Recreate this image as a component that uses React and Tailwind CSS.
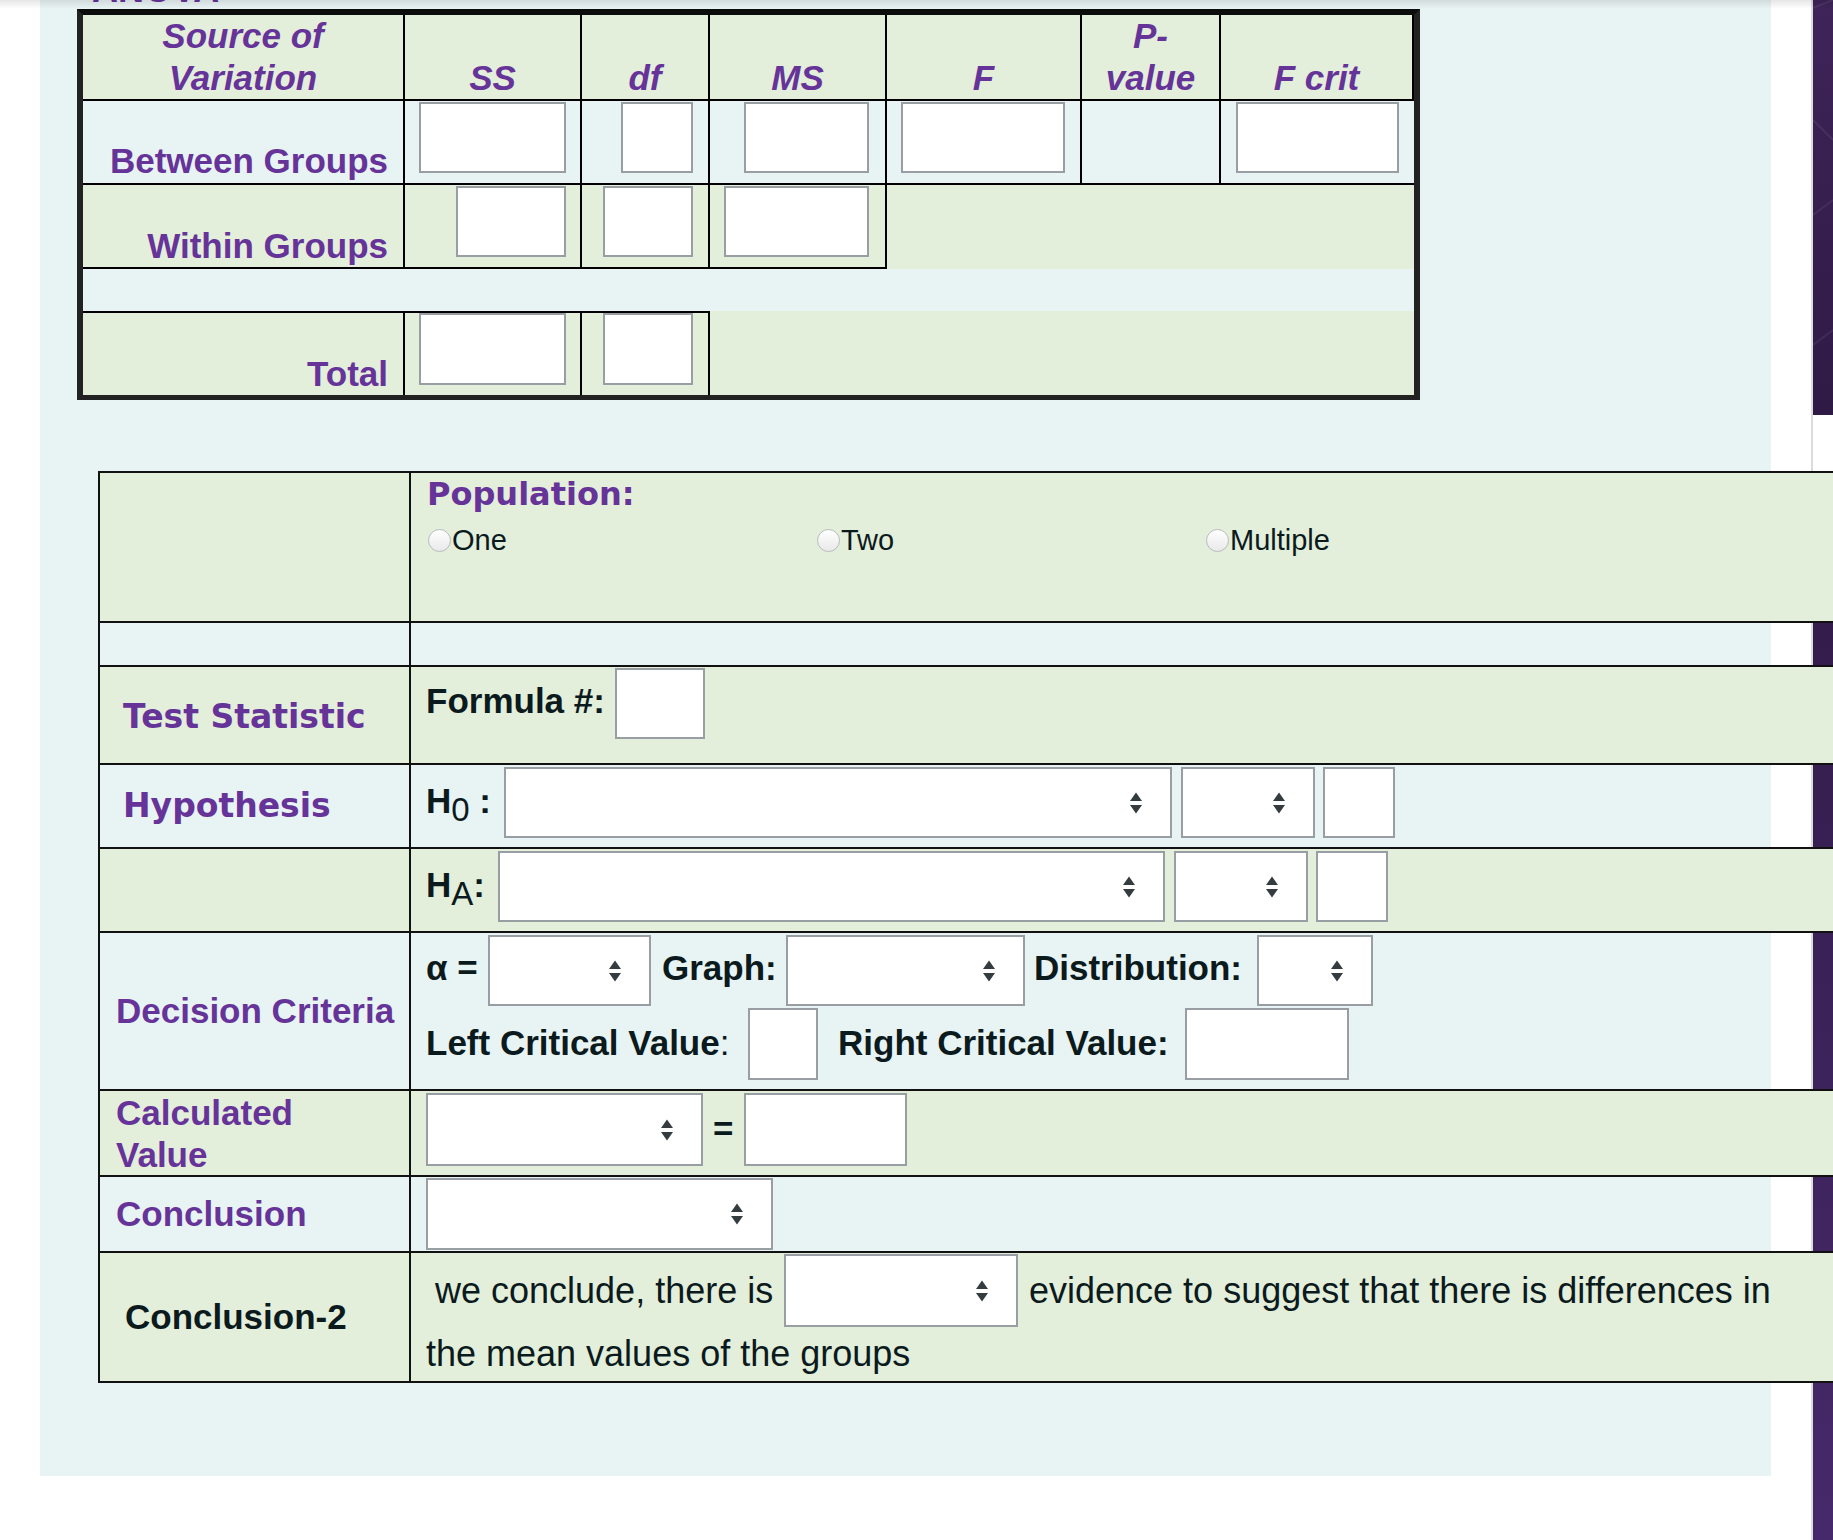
import React from 'react';

// up/down chevrons of a native select
function Arrows() {
  return (
    <svg width="14" height="22" viewBox="0 0 14 22" className="shrink-0">
      <path d="M7 0.5 L13 9 H1 Z" fill="#353c40" />
      <path d="M7 21.5 L13 13 H1 Z" fill="#353c40" />
    </svg>
  );
}

function Select({ className }) {
  return (
    <div className={`flex items-center justify-end pr-[27px] bg-white border-2 border-[#999ea4] shrink-0 ${className}`}>
      <Arrows />
    </div>
  );
}

function Box({ className }) {
  return <div className={`bg-white border-2 border-[#999ea4] shrink-0 ${className}`} />;
}

function Radio({ label }) {
  return (
    <div className="w-[389px] flex items-center">
      <span className="w-[23px] h-[23px] rounded-full border-[1.5px] border-[#b8bbbd] bg-gradient-to-b from-white to-[#e9e9e9] shrink-0" />
      <span className="ml-[1px] text-[29px] leading-[32px] text-[#0b1a1c]">{label}</span>
    </div>
  );
}

function HeadCell({ className = '', children }) {
  return (
    <div className={`flex items-end justify-center text-center border-r-2 border-black font-bold italic text-[35px] leading-[42px] text-[#663399] ${className}`}>
      <span>{children}</span>
    </div>
  );
}

function RowLabel({ children, className = '' }) {
  return (
    <div className={`w-[322px] shrink-0 border-r-2 border-black flex items-end justify-end pr-[15px] text-[35px] leading-[40px] font-bold text-[#663399] ${className}`}>
      {children}
    </div>
  );
}

function AnovaTable() {
  return (
    <div className="ml-[37px] mt-[1px] w-[1343px] shrink-0 border-[6px] border-b-[5px] border-[#222] border-t-[#0c0c0c]">
      <div className="flex h-[86px] bg-[#e3eedb] border-b-2 border-black">
        <HeadCell className="w-[322px]">Source of<br />Variation</HeadCell>
        <HeadCell className="w-[177px]">SS</HeadCell>
        <HeadCell className="w-[128px]">df</HeadCell>
        <HeadCell className="w-[177px]">MS</HeadCell>
        <HeadCell className="w-[195px]">F</HeadCell>
        <HeadCell className="w-[139px]">P-<br />value</HeadCell>
        <HeadCell className="flex-1 border-r-0">F crit</HeadCell>
      </div>

      <div className="flex h-[84px] border-b-2 border-black">
        <RowLabel className="pb-[2px]">Between Groups</RowLabel>
        <div className="w-[177px] border-r-2 border-black flex justify-end items-start pt-[1px] pr-[14px]"><Box className="w-[147px] h-[71px]" /></div>
        <div className="w-[128px] border-r-2 border-black flex justify-end items-start pt-[1px] pr-[15px]"><Box className="w-[72px] h-[71px]" /></div>
        <div className="w-[177px] border-r-2 border-black flex justify-end items-start pt-[1px] pr-[16px]"><Box className="w-[125px] h-[71px]" /></div>
        <div className="w-[195px] border-r-2 border-black flex justify-end items-start pt-[1px] pr-[15px]"><Box className="w-[164px] h-[71px]" /></div>
        <div className="w-[139px] border-r-2 border-black" />
        <div className="flex-1 flex justify-end items-start pt-[1px] pr-[15px]"><Box className="w-[163px] h-[71px]" /></div>
      </div>

      <div className="flex h-[84px] bg-[#e3eedb]">
        <RowLabel className="border-b-2 pb-[1px]">Within Groups</RowLabel>
        <div className="w-[177px] border-r-2 border-b-2 border-black flex justify-end items-start pt-[1px] pr-[14px]"><Box className="w-[110px] h-[71px]" /></div>
        <div className="w-[128px] border-r-2 border-b-2 border-black flex justify-end items-start pt-[1px] pr-[15px]"><Box className="w-[90px] h-[71px]" /></div>
        <div className="w-[177px] border-r-2 border-b-2 border-black flex justify-end items-start pt-[1px] pr-[16px]"><Box className="w-[145px] h-[71px]" /></div>
        <div className="flex-1" />
      </div>

      <div className="h-[42px]" />

      <div className="flex h-[84px] bg-[#e3eedb]">
        <RowLabel className="border-t-2 pb-[1px]">Total</RowLabel>
        <div className="w-[177px] border-r-2 border-t-2 border-black flex justify-end items-start pr-[14px]"><Box className="w-[147px] h-[72px]" /></div>
        <div className="w-[128px] border-r-2 border-t-2 border-black flex justify-end items-start pr-[15px]"><Box className="w-[90px] h-[72px]" /></div>
        <div className="flex-1" />
      </div>
    </div>
  );
}

const heavy = "font-['DejaVu_Sans',sans-serif] font-bold text-[#663399]";
const label = "text-[35px] leading-[40px] font-bold";

function Row({ className = '', left, children }) {
  return (
    <div className={`flex border-b-2 border-[#111] ${className}`}>
      <div className="w-[311px] shrink-0 border-r-2 border-[#111] flex items-center">{left}</div>
      <div className="flex-1 pl-[15px]">{children}</div>
    </div>
  );
}

function TestTable() {
  return (
    <div className="relative z-10 self-start ml-[58px] mt-[71px] w-[1800px] shrink-0 border-l-2 border-t-2 border-[#111] text-[#0b1a1c]">
      <Row className="h-[150px] bg-[#e3eedb]">
        <div className="pt-[1px]">
          <div className={`ml-[1px] text-[32px] leading-[40px] ${heavy}`}>Population:</div>
          <div className="mt-[10px] ml-[2px] flex">
            <Radio label="One" />
            <Radio label="Two" />
            <Radio label="Multiple" />
          </div>
        </div>
      </Row>

      <Row className="h-[44px]" />

      <Row
        className="h-[98px] bg-[#e3eedb]"
        left={<span className={`pl-[23px] pt-[3px] text-[33px] leading-[40px] ${heavy}`}>Test Statistic</span>}
      >
        <div className="flex items-start">
          <span className={`mt-[14px] ${label}`}>Formula #:</span>
          <Box className="ml-[10px] mt-[1px] w-[90px] h-[71px]" />
        </div>
      </Row>

      <Row
        className="h-[84px]"
        left={<span className={`pl-[23px] text-[33px] leading-[40px] ${heavy}`}>Hypothesis</span>}
      >
        <div className="flex items-start pt-[2px]">
          <span className={`w-[78px] shrink-0 mt-[14px] ${label}`}>H<sub className="text-[33px] font-normal">0</sub> :</span>
          <Select className="w-[668px] h-[71px]" />
          <Select className="ml-[9px] w-[134px] h-[71px]" />
          <Box className="ml-[8px] w-[72px] h-[71px]" />
        </div>
      </Row>

      <Row className="h-[84px] bg-[#e3eedb]">
        <div className="flex items-start pt-[2px]">
          <span className={`w-[72px] shrink-0 mt-[14px] ${label}`}>H<sub className="text-[33px] font-normal">A</sub>:</span>
          <Select className="w-[667px] h-[71px]" />
          <Select className="ml-[9px] w-[134px] h-[71px]" />
          <Box className="ml-[8px] w-[72px] h-[71px]" />
        </div>
      </Row>

      <Row
        className="h-[158px]"
        left={<span className={`pl-[16px] text-[#663399] ${label}`}>Decision Criteria</span>}
      >
        <div className="pt-[2px]">
          <div className="flex items-start">
            <span className={`w-[62px] shrink-0 mt-[13px] ${label}`}>α =</span>
            <Select className="w-[163px] h-[71px]" />
            <span className={`ml-[11px] w-[113px] shrink-0 mt-[13px] ${label}`}>Graph:</span>
            <Select className="ml-[11px] w-[239px] h-[71px]" />
            <span className={`ml-[9px] w-[223px] shrink-0 mt-[13px] ${label}`}>Distribution:</span>
            <Select className="w-[116px] h-[71px]" />
          </div>
          <div className="mt-[2px] flex items-start">
            <span className={`w-[322px] shrink-0 mt-[15px] ${label}`}>Left Critical Value<span className="font-normal">:</span></span>
            <Box className="w-[70px] h-[72px]" />
            <span className={`ml-[20px] w-[347px] shrink-0 mt-[15px] ${label}`}>Right Critical Value:</span>
            <Box className="w-[164px] h-[72px]" />
          </div>
        </div>
      </Row>

      <Row
        className="h-[86px] bg-[#e3eedb] [&>div:first-child]:items-start"
        left={<span className="pl-[16px] pt-[1px] text-[35px] leading-[42px] font-bold text-[#663399]">Calculated<br />Value</span>}
      >
        <div className="flex items-start pt-[2px]">
          <Select className="w-[277px] h-[73px]" />
          <span className="ml-[10px] w-[31px] h-[73px] shrink-0 flex items-center text-[35px] font-bold">=</span>
          <Box className="w-[163px] h-[73px]" />
        </div>
      </Row>

      <Row
        className="h-[76px]"
        left={<span className={`pl-[16px] text-[#663399] ${label}`}>Conclusion</span>}
      >
        <div className="pt-[1px]">
          <Select className="w-[347px] h-[72px]" />
        </div>
      </Row>

      <Row
        className="h-[130px] bg-[#e3eedb]"
        left={<span className={`pl-[25px] ${label}`}>Conclusion-2</span>}
      >
        <div className="pt-[1px] text-[36px] leading-[40px]">
          <div className="flex items-center h-[73px]">
            <span className="ml-[9px] w-[349px] shrink-0">we conclude, there is</span>
            <Select className="w-[234px] h-[73px]" />
            <span className="ml-[11px] whitespace-nowrap">evidence to suggest that there is differences in</span>
          </div>
          <div className="mt-[7px] whitespace-nowrap">the mean values of the groups</div>
        </div>
      </Row>
    </div>
  );
}

function SideStrip() {
  return (
    <div className="w-[20px] shrink-0 flex flex-col">
      <div className="h-[415px] bg-gradient-to-b from-[#3f2459] to-[#2f1a45] overflow-hidden">
        <svg width="20" height="415" viewBox="0 0 20 415">
          <path d="M0 8 L20 0 M0 215 L20 200 M0 120 L20 140 M0 345 L20 330" stroke="#ffffff" strokeOpacity="0.07" strokeWidth="2" />
        </svg>
      </div>
      <div className="h-[56px] bg-white" />
      <div className="flex-1 bg-gradient-to-b from-[#311b48] to-[#46296a]" />
    </div>
  );
}

export default function App() {
  return (
    <div className="relative w-[1833px] h-[1540px] overflow-hidden bg-white flex font-['Liberation_Sans',Arial,sans-serif]">
      <div className="w-[40px] shrink-0" />
      <main className="w-[1731px] h-[1476px] shrink-0 bg-[#e8f3f3] flex flex-col">
        <h2 className="-mt-[28px] ml-[52px] h-[36px] text-[36px] leading-[36px] font-bold text-[#663399]">ANOVA</h2>
        <AnovaTable />
        <TestTable />
      </main>
      <div className="w-[40px] shrink-0" />
      <div className="w-[2px] shrink-0 bg-[#dcdcdc]" />
      <SideStrip />
      <div className="absolute top-0 inset-x-0 h-[9px] bg-gradient-to-b from-black/10 to-transparent z-20 pointer-events-none" />
    </div>
  );
}
